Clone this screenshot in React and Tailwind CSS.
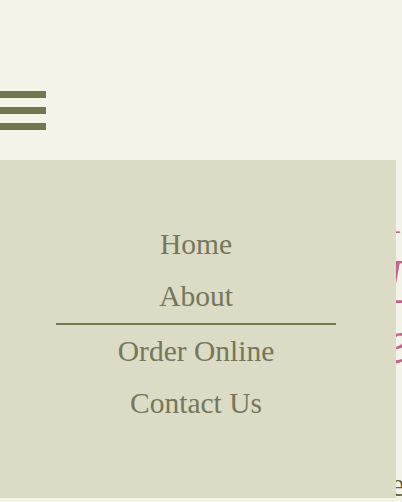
import React from 'react';

const links = ['Home', 'About', 'Order Online', 'Contact Us'];

function App() {
  return (
    <div className="w-[402px] h-[502px] bg-[#f4f3e8] overflow-hidden">
      <header className="h-[160px] pt-[91px]">
        <button className="flex flex-col gap-[9px]" aria-label="menu">
          <span className="block w-[46px] h-[7px] bg-[#717650]" />
          <span className="block w-[46px] h-[7px] bg-[#717650]" />
          <span className="block w-[46px] h-[7px] bg-[#717650]" />
        </button>
      </header>
      <div className="flex">
        <nav className="w-[396px] h-[338px] shrink-0 bg-[#dcdbc6] pt-[58px]">
          <ul className="ml-[56px] w-[280px] text-center text-[29.5px] leading-[52px] text-[#74775a] font-['Liberation_Serif',serif]">
            {links.map(link => (
              <li key={link} className={link === 'About' ? 'h-[55px] pb-[1px] border-b-2 border-[#737651]' : 'h-[52px]'}>
                <a href="#">{link}</a>
              </li>
            ))}
          </ul>
        </nav>
        {/* page content peeking out from behind the menu */}
        <div className="relative h-[338px] flex-1 overflow-hidden">
          <div className="absolute left-[-14px] top-[60px] text-[64px] leading-none italic text-[#c0648c] font-['Liberation_Serif',serif] whitespace-nowrap">
            <div className="text-[20px] ml-[12px]">-</div>
            <div className="mt-[10px]">Ll</div>
            <div className="mt-[-4px]">e</div>
          </div>
          <div className="absolute left-[-6px] bottom-[-4px] text-[34px] leading-none text-[#5e6140] font-['Liberation_Serif',serif]">e</div>
        </div>
      </div>
    </div>
  );
}

export default App;
